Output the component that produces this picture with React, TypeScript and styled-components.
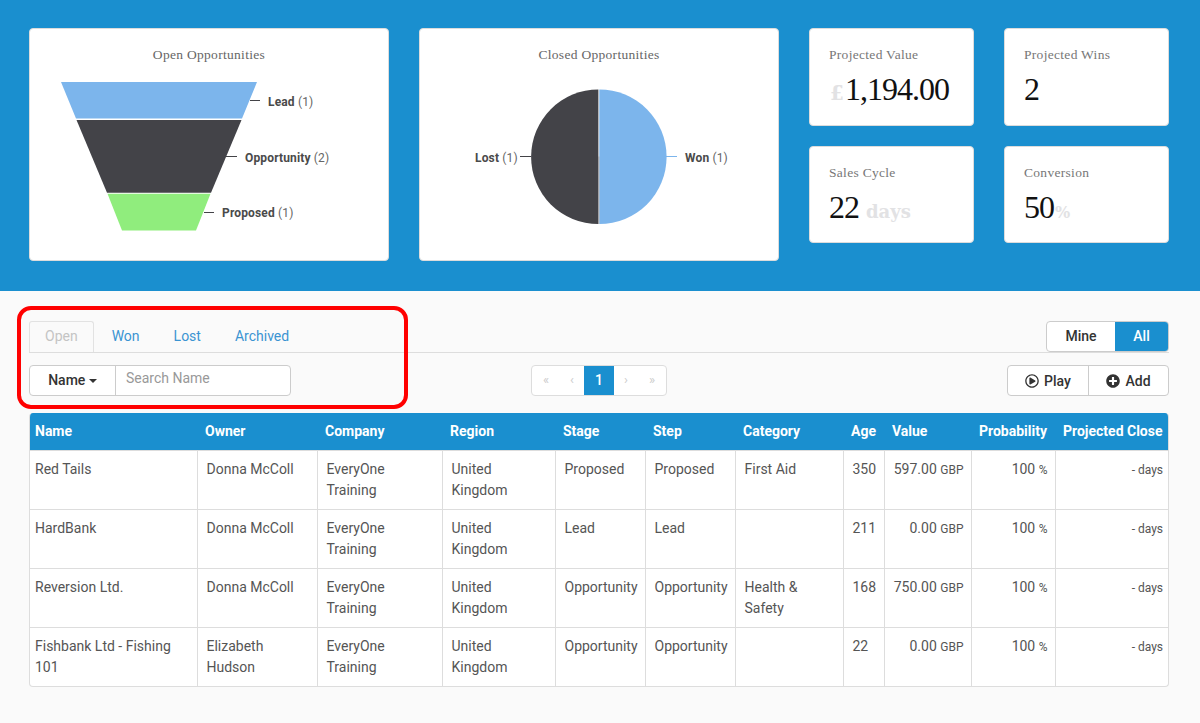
import React from 'react'
import styled, { createGlobalStyle } from 'styled-components'
import { FaPlusCircle, FaRegPlayCircle } from 'react-icons/fa'

const BLUE = '#1a8fcf'
const SLAB = '"Liberation Serif", "DejaVu Serif", serif'

const GlobalStyle = createGlobalStyle`
  html, body {
    margin: 0;
    background: #fafafa;
    font-family: Roboto, "Liberation Sans", sans-serif;
    font-size: 14px;
    color: #555;
  }
  * { box-sizing: border-box; }
`

const Page = styled.div`
  position: relative;
  width: 1200px;
  height: 723px;
  overflow: hidden;
`

const Banner = styled.section`
  height: 291px;
  background: ${BLUE};
  padding: 28px 31px 0 29px;
  display: flex;
  gap: 30px;
  align-items: flex-start;
`

const Card = styled.div`
  background: #fff;
  border: 1px solid #dcdcdc;
  border-radius: 4px;
`

const ChartCard = styled(Card)`
  width: 360px;
  height: 233px;
  padding-top: 18px;
`

const CardTitle = styled.div`
  font-family: ${SLAB};
  font-size: 13.5px;
  line-height: 16px;
  color: #666;
  text-align: center;
  letter-spacing: 0.3px;
`

const ChartSvg = styled.svg`
  display: block;
  margin-top: 1px;
`

const ChartLabel = styled.text`
  font-family: Roboto, "Liberation Sans", sans-serif;
  font-size: 12px;
  font-weight: 700;
  letter-spacing: 0.15px;
  fill: #4a4a4a;
`

const ChartCount = styled.tspan`
  font-weight: 400;
  fill: #666;
`

const StatGrid = styled.div`
  display: grid;
  grid-template-columns: 165px 165px;
  grid-template-rows: 98px 97px;
  column-gap: 30px;
  row-gap: 20px;
`

const StatCard = styled(Card)`
  padding: 18px 19px 0;
`

const StatLabel = styled.div`
  font-family: ${SLAB};
  font-size: 13.5px;
  line-height: 16px;
  color: #777;
  letter-spacing: 0.3px;
`

const StatValue = styled.div`
  font-family: ${SLAB};
  font-size: 32px;
  line-height: 40px;
  margin-top: 6px;
  color: #111;
  letter-spacing: -1px;
  white-space: nowrap;
`

const StatUnit = styled.span<{ $size: number; $gap?: number }>`
  font-family: "DejaVu Serif", serif;
  font-size: ${({ $size }) => $size}px;
  font-weight: 700;
  letter-spacing: 0;
  color: #e2e2e4;
  margin: 0 ${({ $gap }) => $gap ?? 0}px;
`

const Content = styled.main`
  padding: 30px 31px 0 29px;
`

const TabRow = styled.div`
  display: flex;
  align-items: flex-end;
  justify-content: space-between;
  height: 32px;
  border-bottom: 1px solid #ddd;
`

const Tabs = styled.nav`
  display: flex;
`

const Tab = styled.a<{ $active?: boolean }>`
  height: 31px;
  line-height: 28px;
  padding: 0 ${({ $active }) => ($active ? '15px' : '16px')};
  margin-right: ${({ $active }) => ($active ? '1px' : '0')};
  color: ${({ $active }) => ($active ? '#c4c4c4' : '#3a94d2')};
  border: 1px solid ${({ $active }) => ($active ? '#e2e2e2' : 'transparent')};
  border-bottom: 0;
  border-radius: 3px 3px 0 0;
  background: ${({ $active }) => ($active ? '#fafafa' : 'transparent')};
`

const Segmented = styled.div`
  display: flex;
  height: 31px;
  border: 1px solid #ccc;
  border-radius: 4px;
  overflow: hidden;
  background: #fff;
  font-weight: 500;
`

const Segment = styled.div<{ $on?: boolean; $w: number }>`
  width: ${({ $w }) => $w}px;
  line-height: 29px;
  text-align: center;
  color: ${({ $on }) => ($on ? '#fff' : '#333')};
  background: ${({ $on }) => ($on ? BLUE : 'transparent')};
`

const Toolbar = styled.div`
  display: grid;
  grid-template-columns: 502px auto 1fr;
  align-items: start;
  height: 60px;
  padding-top: 12px;
`

const SearchGroup = styled.div`
  display: flex;
  width: 262px;
  height: 31px;
  background: #fff;
  border: 1px solid #ccc;
  border-radius: 4px;
`

const SearchField = styled.div`
  flex: 1;
  border-left: 1px solid #ccc;
  padding-left: 10px;
  line-height: 25px;
  color: #999;
`

const DropButton = styled.div`
  width: 85px;
  text-align: center;
  line-height: 29px;
  font-weight: 500;
  color: #333;
`

const Caret = styled.span`
  display: inline-block;
  vertical-align: middle;
  border-top: 4px solid #333;
  border-left: 4px solid transparent;
  border-right: 4px solid transparent;
`

const Pager = styled.div`
  display: flex;
  height: 31px;
  background: #fff;
  border: 1px solid #ddd;
  border-radius: 4px;
  overflow: hidden;
`

const PageItem = styled.div<{ $on?: boolean; $w: number }>`
  width: ${({ $w }) => $w}px;
  text-align: center;
  line-height: 28px;
  font-size: ${({ $on }) => ($on ? '14px' : '13px')};
  font-weight: ${({ $on }) => ($on ? 500 : 400)};
  color: ${({ $on }) => ($on ? '#fff' : '#ccc')};
  background: ${({ $on }) => ($on ? BLUE : 'transparent')};
  & + & {
    border-left: ${({ $on }) => ($on ? '0' : '1px solid #e6e6e6')};
  }
`

const Actions = styled.div`
  display: flex;
  justify-self: end;
  height: 31px;
  background: #fff;
  border: 1px solid #ccc;
  border-radius: 4px;
  font-weight: 500;
  color: #333;
`

const ActionButton = styled.div<{ $w: number }>`
  width: ${({ $w }) => $w}px;
  display: flex;
  align-items: center;
  justify-content: center;
  gap: 5px;
  & + & {
    border-left: 1px solid #ccc;
  }
`

const TableWrap = styled.div`
  width: 1140px;
  border: 1px solid #ddd;
  border-top: 0;
  border-radius: 4px;
  overflow: hidden;
  background: #fff;
`

const Table = styled.table`
  width: 100%;
  table-layout: fixed;
  border-collapse: collapse;
`

const Th = styled.th`
  height: 37px;
  padding: 0 0 0 8px;
  background: ${BLUE};
  color: #fff;
  font-size: 14px;
  font-weight: 700;
  text-align: left;
  white-space: nowrap;
  &:first-child {
    padding-left: 5px;
  }
`

const Td = styled.td<{ $right?: boolean }>`
  height: 59px;
  padding: 8px 7px 8px 9px;
  line-height: 21px;
  vertical-align: top;
  text-align: ${({ $right }) => ($right ? 'right' : 'left')};
  border-top: 1px solid #ddd;
  border-left: 1px solid #ddd;
  color: #555;
  &:first-child {
    padding-left: 5px;
    border-left: 0;
  }
  &:last-child {
    padding-right: 5px;
  }
`

const Small = styled.span`
  font-size: 12px;
`

const Annotation = styled.div`
  position: absolute;
  left: 17px;
  top: 306px;
  width: 391px;
  height: 103px;
  border: 4px solid #f00;
  border-radius: 14px;
  pointer-events: none;
`

const columns = [167, 120, 125, 113, 90, 90, 108, 41, 87, 84, 113]
const headers = ['Name', 'Owner', 'Company', 'Region', 'Stage', 'Step', 'Category', 'Age', 'Value', 'Probability', 'Projected Close']

const rows = [
  { name: 'Red Tails', owner: 'Donna McColl', stage: 'Proposed', step: 'Proposed', category: 'First Aid', age: 350, value: '597.00' },
  { name: 'HardBank', owner: 'Donna McColl', stage: 'Lead', step: 'Lead', category: '', age: 211, value: '0.00' },
  { name: 'Reversion Ltd.', owner: 'Donna McColl', stage: 'Opportunity', step: 'Opportunity', category: 'Health & Safety', age: 168, value: '750.00' },
  { name: 'Fishbank Ltd - Fishing 101', owner: 'Elizabeth Hudson', stage: 'Opportunity', step: 'Opportunity', category: '', age: 22, value: '0.00' },
]

const Funnel = () => (
  <ChartSvg width="358" height="195" viewBox="30 64 358 195">
    <polygon points="61,82 257,82 242,118.5 76,118.5" fill="#7cb5ec" />
    <polygon points="76.5,120 241.5,120 211,192.8 107,192.8" fill="#434348" />
    <polygon points="107.5,193.8 210.5,193.8 196,230.5 122,230.5" fill="#90ed7d" />
    <path d="M250 100.5H260" stroke="#434348" />
    <path d="M226 156.5H237" stroke="#434348" />
    <path d="M204 212.5H214" stroke="#434348" />
    <ChartLabel x="268" y="106">Lead <ChartCount>(1)</ChartCount></ChartLabel>
    <ChartLabel x="245" y="162">Opportunity <ChartCount>(2)</ChartCount></ChartLabel>
    <ChartLabel x="222" y="217">Proposed <ChartCount>(1)</ChartCount></ChartLabel>
  </ChartSvg>
)

const Pie = () => (
  <ChartSvg width="358" height="195" viewBox="420 64 358 195">
    <path d="M599.3 89.5A67.3 67.3 0 0 1 599.3 224.1Z" fill="#7cb5ec" />
    <path d="M598.4 89.5A67.3 67.3 0 0 0 598.4 224.1Z" fill="#434348" />
    <path d="M598.8 156.5V224" stroke="#9a9a9e" />
    <path d="M666 156.5H677" stroke="#7cb5ec" />
    <path d="M520 156.5H531" stroke="#434348" />
    <ChartLabel x="685" y="162">Won <ChartCount>(1)</ChartCount></ChartLabel>
    <ChartLabel x="475" y="162">Lost <ChartCount>(1)</ChartCount></ChartLabel>
  </ChartSvg>
)

export default function App() {
  return (
    <Page>
      <GlobalStyle />
      <Banner>
        <ChartCard>
          <CardTitle>Open Opportunities</CardTitle>
          <Funnel />
        </ChartCard>
        <ChartCard>
          <CardTitle>Closed Opportunities</CardTitle>
          <Pie />
        </ChartCard>
        <StatGrid>
          <StatCard>
            <StatLabel>Projected Value</StatLabel>
            <StatValue><StatUnit $size={20} $gap={1}>£</StatUnit>1,194.00</StatValue>
          </StatCard>
          <StatCard>
            <StatLabel>Projected Wins</StatLabel>
            <StatValue>2</StatValue>
          </StatCard>
          <StatCard>
            <StatLabel>Sales Cycle</StatLabel>
            <StatValue>22<StatUnit $size={18} $gap={7}>days</StatUnit></StatValue>
          </StatCard>
          <StatCard>
            <StatLabel>Conversion</StatLabel>
            <StatValue>50<StatUnit $size={16} $gap={1}>%</StatUnit></StatValue>
          </StatCard>
        </StatGrid>
      </Banner>

      <Content>
        <TabRow>
          <Tabs>
            <Tab $active>Open</Tab>
            <Tab>Won</Tab>
            <Tab>Lost</Tab>
            <Tab>Archived</Tab>
          </Tabs>
          <Segmented>
            <Segment $w={68}>Mine</Segment>
            <Segment $w={53} $on>All</Segment>
          </Segmented>
        </TabRow>

        <Toolbar>
          <SearchGroup>
            <DropButton>Name <Caret /></DropButton>
            <SearchField>Search Name</SearchField>
          </SearchGroup>
          <Pager>
            <PageItem $w={28}>«</PageItem>
            <PageItem $w={24}>‹</PageItem>
            <PageItem $w={30} $on>1</PageItem>
            <PageItem $w={24}>›</PageItem>
            <PageItem $w={28}>»</PageItem>
          </Pager>
          <Actions>
            <ActionButton $w={80}><FaRegPlayCircle size={14} />Play</ActionButton>
            <ActionButton $w={80}><FaPlusCircle size={14} />Add</ActionButton>
          </Actions>
        </Toolbar>

        <TableWrap>
          <Table>
            <colgroup>
              {columns.map((width, i) => (
                <col key={i} style={{ width }} />
              ))}
            </colgroup>
            <thead>
              <tr>
                {headers.map((header) => (
                  <Th key={header}>{header}</Th>
                ))}
              </tr>
            </thead>
            <tbody>
              {rows.map((row) => (
                <tr key={row.name}>
                  <Td>{row.name}</Td>
                  <Td>{row.owner}</Td>
                  <Td>EveryOne Training</Td>
                  <Td>United Kingdom</Td>
                  <Td>{row.stage}</Td>
                  <Td>{row.step}</Td>
                  <Td>{row.category}</Td>
                  <Td>{row.age}</Td>
                  <Td $right>{row.value} <Small>GBP</Small></Td>
                  <Td $right>100 <Small>%</Small></Td>
                  <Td $right><Small>- days</Small></Td>
                </tr>
              ))}
            </tbody>
          </Table>
        </TableWrap>
      </Content>

      <Annotation />
    </Page>
  )
}
